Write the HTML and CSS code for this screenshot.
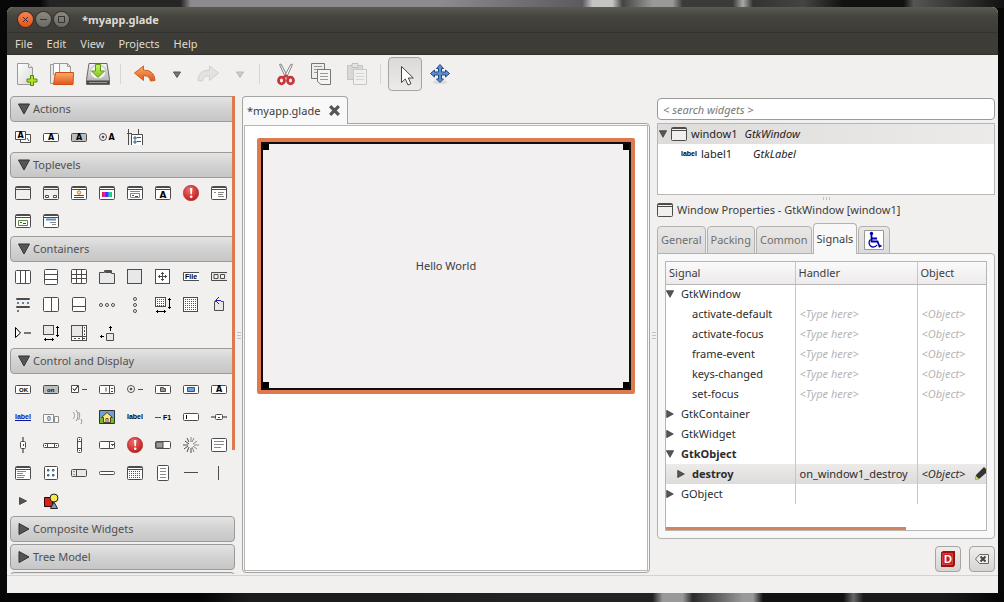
FILE: index.html
```html
<!DOCTYPE html>
<html lang="en">
<head>
<meta charset="utf-8">
<title>*myapp.glade</title>
<link rel="stylesheet" href="styles.css">
</head>
<body>
<svg class="defs" aria-hidden="true">
  <defs>
    <linearGradient id="g-orange" x1="0" y1="0" x2="0" y2="1"><stop offset="0" stop-color="#f9b06a"/><stop offset="1" stop-color="#e2541b"/></linearGradient>
    <linearGradient id="g-paper" x1="0" y1="0" x2="1" y2="1"><stop offset="0" stop-color="#fff"/><stop offset="1" stop-color="#d8d8d6"/></linearGradient>
    <linearGradient id="g-drive" x1="0" y1="0" x2="0" y2="1"><stop offset="0" stop-color="#f4f4f4"/><stop offset="1" stop-color="#a4a4a4"/></linearGradient>
    <linearGradient id="g-green" x1="0" y1="0" x2="0" y2="1"><stop offset="0" stop-color="#cdf06a"/><stop offset="1" stop-color="#7fc414"/></linearGradient>
    <radialGradient id="g-red" cx=".4" cy=".3" r=".8"><stop offset="0" stop-color="#f26a6a"/><stop offset="1" stop-color="#b81414"/></radialGradient>
    <linearGradient id="g-hue"><stop offset="0" stop-color="#e02020"/><stop offset=".25" stop-color="#e020d0"/><stop offset=".5" stop-color="#2030f0"/><stop offset=".75" stop-color="#20d0d0"/><stop offset="1" stop-color="#30d020"/></linearGradient>
    <pattern id="p-dots" width="2" height="2" patternUnits="userSpaceOnUse"><rect width="1" height="1" fill="#555"/></pattern>
  </defs>
  <symbol id="win" viewBox="0 0 16 16"><rect x=".5" y="1.5" width="15" height="13" rx="1"/><path d="M1 2.5h14M1 4.5h14"/></symbol>
  <symbol id="btn" viewBox="0 0 16 16"><rect x=".5" y="4.5" width="15" height="8" rx="1"/></symbol>
  <symbol id="alert" viewBox="0 0 16 16"><circle cx="8" cy="8" r="7.700" fill="url(#g-red)" stroke="#b02020" stroke-width=".6"/><path d="M7 3h2.400l-.5 6.300h-1.400z" fill="#fff" stroke="none"/><circle cx="8.200" cy="11.800" r="1.300" fill="#fff" stroke="none"/></symbol>
  <symbol id="down" viewBox="0 0 12 12"><path d="M.5 1h11L6 11z" fill="#555" stroke="#333"/></symbol>
  <symbol id="right" viewBox="0 0 12 12"><path d="M1 .5v11L11 6z" fill="#555" stroke="#333"/></symbol>
</svg>

<div class="window">
  <header class="titlebar">
    <button class="wm wm-close" aria-label="Close"><svg viewBox="0 0 15 15"><path d="M5 5l5 5M10 5l-5 5"/></svg></button>
    <button class="wm" aria-label="Minimize"><svg viewBox="0 0 15 15"><path d="M4 7.500h7"/></svg></button>
    <button class="wm" aria-label="Maximize"><svg viewBox="0 0 15 15"><path d="M4.500 4.500h6v6h-6z"/></svg></button>
    <h1>*myapp.glade</h1>
  </header>

  <nav class="menubar">
    <button>File</button><button>Edit</button><button>View</button><button>Projects</button><button>Help</button>
  </nav>

  <div class="toolbar">
    <button aria-label="New"><svg viewBox="0 0 24 24"><path d="M3.500 1.500h11l4 4v17h-15z" fill="url(#g-paper)" stroke="#9a9a9a"/><path d="M14.500 1.500v4h4" fill="#eee" stroke="#9a9a9a"/><path d="M16.500 13.500h3v3.500h3.500v3h-3.500v3.500h-3V20H13v-3h3.500z" fill="#b5e02c" stroke="#4e8a06"/></svg></button>
    <button aria-label="Open"><svg viewBox="0 0 24 24"><path d="M.5 2.500h5v19h-5z" fill="#e8e8e6" stroke="#999"/><path d="M3.500 1.500h7l3 3v8h-10z" fill="#fff" stroke="#999"/><path d="M9.500 1.500h8l3 3v9h-11z" fill="#f3f3f3" stroke="#999"/><path d="M17.500 1.500v3h3" fill="none" stroke="#999"/><path d="M5.500 10.500h18l-.5 12h-19.500z" fill="url(#g-orange)" stroke="#cf4d16"/></svg></button>
    <button aria-label="Save"><svg viewBox="0 0 24 24"><path d="M3 1.500h18l2.500 16v5H.5v-5z" fill="url(#g-drive)" stroke="#666"/><path d="M1 18.500h22v3.500H1z" fill="#4a4a4a"/><path d="M3 20.500h18" stroke="#999"/><ellipse cx="12" cy="10" rx="8" ry="7" fill="#f4f4f4" stroke="#bbb"/><path d="M9.500 2.500h5v6.500h4l-6.500 6.500L5.500 9h4z" fill="url(#g-green)" stroke="#5b9a0a"/></svg></button>
    <span class="sep"></span>
    <button class="wide" aria-label="Undo"><svg viewBox="0 0 24 24"><path d="M10.500 4L1.500 11l9 7.500v-4.700c4-.3 6 1.500 7 5.200l4.500-.5C21.500 11 17 8 10.500 8.200z" fill="url(#g-orange)" stroke="#c8601c" stroke-linejoin="round"/></svg></button>
    <button class="drop" aria-label="Undo history"><svg viewBox="0 0 12 12"><path d="M2.500 4h7L6 9.500z" fill="#777" stroke="#555"/></svg></button>
    <button class="wide" aria-label="Redo" disabled><svg viewBox="0 0 24 24"><path d="M13.500 4l9 7-9 7.500v-4.700c-4-.3-6 1.500-7 5.200l-4.500-.5C2.500 11 7 8 13.500 8.200z" fill="#e2e2e0" stroke="#cfcfcd" stroke-linejoin="round"/></svg></button>
    <button class="drop" aria-label="Redo history" disabled><svg viewBox="0 0 12 12"><path d="M2.500 4h7L6 9.500z" fill="#ccc" stroke="#b8b8b8"/></svg></button>
    <span class="sep sep-wide"></span>
    <button aria-label="Cut"><svg viewBox="0 0 24 24"><path d="M5.500 2.500l1.500-.5 6.500 12-2 1.500z" fill="#eee" stroke="#888"/><path d="M18.500 2.500L17 2l-6.500 12 2 1.500z" fill="#fff" stroke="#888"/><ellipse cx="7.500" cy="18.500" rx="3" ry="3.300" fill="none" stroke="#c8363a" stroke-width="2.800"/><ellipse cx="16.500" cy="18.500" rx="3" ry="3.300" fill="none" stroke="#c8363a" stroke-width="2.800"/><path d="M9 15.500l3-2 3 2" fill="none" stroke="#c8363a" stroke-width="2"/></svg></button>
    <button aria-label="Copy"><svg viewBox="0 0 24 24"><path d="M1.500 1.500h13v15h-13z" fill="#eeeeec" stroke="#777"/><path d="M4 4.500h8M4 7.500h8M4 10.500h5" stroke="#999"/><path d="M7.500 7.500h13v15h-9.500l-3.500-3z" fill="#f4f4f2" stroke="#777"/><path d="M10 11.500h8M10 14.500h8M10 17.500h8" stroke="#999"/></svg></button>
    <button aria-label="Paste" disabled><svg viewBox="0 0 24 24"><path d="M1.500 3.500h15v14h-15z" fill="#d8d8d6" stroke="#c4c4c2"/><path d="M6 1.500h6v4H6z" fill="#e4e4e2" stroke="#c0c0be"/><path d="M7.500 7.500h13v15h-13z" fill="#f0f0ee" stroke="#c8c8c6"/><path d="M10 11.500h8M10 14.500h8M10 17.500h8" stroke="#d4d4d2"/></svg></button>
    <span class="sep"></span>
    <button class="pressed" aria-label="Select"><svg viewBox="0 0 24 24"><path d="M8.500 4.500v16l3.800-3.500 2.700 6 3-1.300-2.700-5.700h5z" fill="#fff" stroke="#444"/></svg></button>
    <button aria-label="Drag resize"><svg viewBox="0 0 24 24"><ellipse cx="12" cy="20" rx="7" ry="2" fill="#dcdad8"/><path d="M12 2.500l3.500 4h-2v3.500h4v-2l4 3.500-4 3.500v-2h-4v4h2L12 20.500l-3.500-3.500h2v-4h-4v2l-4-3.500 4-3.500v2h4V6.500h-2z" fill="#5f8fcb" stroke="#204a87"/></svg></button>
  </div>

  <main class="workspace">
    <aside class="palette">
      <button class="group"><svg><use href="#down"/></svg>Actions</button>
      <div class="tools">
        <button aria-label="Action group"><svg viewBox="0 0 16 16"><path d="M5.500 5.500h10v8h-10z"/><path d="M.5 2.500h10v8H.5z"/><text x="2.500" y="9" class="t8">A</text><path d="M12 9l2 3"/></svg></button>
        <button aria-label="Action"><svg viewBox="0 0 16 16"><use href="#btn"/><text x="5" y="11" class="t8">A</text></svg></button>
        <button aria-label="Toggle action"><svg viewBox="0 0 16 16"><g class="shade"><use href="#btn"/></g><text x="5" y="11" class="t8">A</text></svg></button>
        <button aria-label="Radio action"><svg viewBox="0 0 16 16"><circle cx="4" cy="8" r="3.500"/><circle cx="4" cy="8" r="1" class="dark"/><text x="9.500" y="10.500" class="t8">A</text></svg></button>
        <button aria-label="Recent action"><svg viewBox="0 0 16 16"><path d="M1.500 0v16M11.500 0v5M4.500 16V5.500h11V16M0 4.500h5"/><path d="M7 8h2v2H7zM7 12h2v2H7z" class="tint"/><path d="M10 8.500h4M10 12.500h4"/></svg></button>
      </div>

      <button class="group"><svg><use href="#down"/></svg>Toplevels</button>
      <div class="tools">
        <button aria-label="Window"><svg viewBox="0 0 16 16"><g class="clear"><use href="#win"/></g></svg></button>
        <button aria-label="Dialog"><svg viewBox="0 0 16 16"><g class="clear"><use href="#win"/></g><path d="M2.500 10.500h3v2h-3zM10.500 10.500h3v2h-3z"/></svg></button>
        <button aria-label="About dialog"><svg viewBox="0 0 16 16"><use href="#win"/><circle cx="8" cy="7.500" r="1.700" stroke="#d07a10" fill="#ffe0a0"/><path d="M3 10.500h10M3 12.500h10"/></svg></button>
        <button aria-label="Color dialog"><svg viewBox="0 0 16 16"><use href="#win"/><path d="M3 7h10v5H3z" fill="url(#g-hue)" stroke="none"/></svg></button>
        <button aria-label="File chooser"><svg viewBox="0 0 16 16"><use href="#win"/><path d="M3 6.500h10" class="soft"/><path d="M3.500 8.500h9v4h-9z" class="soft"/><path d="M5 10.500h2M8 11.500h3"/></svg></button>
        <button aria-label="Font dialog"><svg viewBox="0 0 16 16"><use href="#win"/><text x="4.500" y="13" class="t9">A</text></svg></button>
        <button aria-label="Message dialog"><svg viewBox="0 0 16 16"><use href="#alert"/></svg></button>
        <button aria-label="Recent chooser"><svg viewBox="0 0 16 16"><use href="#win"/><path d="M3 7.500h2M7 7.500h6M7 9.500h5M7 11.500h6" class="soft"/></svg></button>
        <button aria-label="Assistant"><svg viewBox="0 0 16 16"><use href="#win"/><path d="M3.500 7.500h9v5h-9z" stroke="#5a8a3a"/><path d="M5 9.500h2M8 10.500h3"/></svg></button>
        <button aria-label="Link window"><svg viewBox="0 0 16 16"><use href="#win"/><path d="M3 6.500h10" stroke="#5a90cc" stroke-width="2"/><path d="M7 9.500h6M9 11.500h4" class="soft"/></svg></button>
      </div>

      <button class="group"><svg><use href="#down"/></svg>Containers</button>
      <div class="tools">
        <button aria-label="Horizontal box"><svg viewBox="0 0 16 16"><rect x=".5" y="1.500" width="15" height="13" rx="1"/><path d="M5.500 2v12M10.500 2v12"/></svg></button>
        <button aria-label="Vertical box"><svg viewBox="0 0 16 16"><rect x="1.500" y=".5" width="13" height="15" rx="1"/><path d="M2 5.500h12M2 10.500h12"/></svg></button>
        <button aria-label="Table"><svg viewBox="0 0 16 16"><rect x=".5" y=".5" width="15" height="14" rx="1"/><path d="M5.500 1v13M10.500 1v13M1 5.500h14M1 9.500h14"/></svg></button>
        <button aria-label="Notebook"><svg viewBox="0 0 16 16"><path d="M.5 3.500h5v-2h7v3h3v10H.5z" class="pale"/><path d="M6.500 2.500h6v1h-6z" class="grey"/></svg></button>
        <button aria-label="Frame"><svg viewBox="0 0 16 16"><rect x=".5" y=".5" width="14" height="14" class="pale"/></svg></button>
        <button aria-label="Alignment"><svg viewBox="0 0 16 16"><rect x=".5" y=".5" width="14" height="14"/><path d="M7.500 3v9M3 7.500h9M6 4.500h3M6 10.500h3M4.500 6v3M10.500 6v3"/></svg></button>
        <button aria-label="Menu bar"><svg viewBox="0 0 16 16"><path d="M16 3.500H.5v8H16"/><text x="2" y="10">File</text></svg></button>
        <button aria-label="Toolbar"><svg viewBox="0 0 16 16"><path d="M16 3.500H.5v8H16M3 5.500h4v4H3zM9.500 5.500h4v4h-4z" class="pale"/></svg></button>
        <button aria-label="Tool palette"><svg viewBox="0 0 16 16"><path d="M1.500 1.500h13v1h-13zM1.500 9.500h13v1h-13z"/><path d="M2.500 5.500h1v1h-1zM7.500 5.500h1v1h-1zM12.500 5.500h1v1h-1z" class="tint"/><path d="M2.500 13.500h1v1h-1z"/></svg></button>
        <button aria-label="Horizontal panes"><svg viewBox="0 0 16 16"><rect x=".5" y=".5" width="15" height="14" rx="1"/><path d="M8.500 1v13"/></svg></button>
        <button aria-label="Vertical panes"><svg viewBox="0 0 16 16"><rect x="1.500" y=".5" width="13" height="14" rx="1"/><path d="M2 9.500h12"/></svg></button>
        <button aria-label="Horizontal button box"><svg viewBox="0 0 16 16"><circle cx="2" cy="8" r="1.500"/><circle cx="8" cy="8" r="1.500"/><circle cx="14" cy="8" r="1.500"/></svg></button>
        <button aria-label="Vertical button box"><svg viewBox="0 0 16 16"><circle cx="8" cy="2" r="1.500"/><circle cx="8" cy="8" r="1.500"/><circle cx="8" cy="14" r="1.500"/></svg></button>
        <button aria-label="Layout"><svg viewBox="0 0 16 16"><rect x=".5" y=".5" width="10" height="9"/><path d="M2 2h8v7H2z" fill="url(#p-dots)" stroke="none"/><path d="M14.500 1v11M13 2.500h3M13 10.500h3M1 14.500h10M2.500 13v3M9.500 13v3" class="ink"/></svg></button>
        <button aria-label="Fixed"><svg viewBox="0 0 16 16"><rect x=".5" y=".5" width="14" height="14"/><path d="M2 2h12v12H2z" fill="url(#p-dots)" stroke="none"/></svg></button>
        <button aria-label="Event box"><svg viewBox="0 0 16 16"><path d="M6 4.500H3.500v9h9v-9H10" class="pale"/><path d="M8 0L4.500 3.500L8 7M5 3.500h5" fill="none" stroke="#2418b8"/></svg></button>
        <button aria-label="Expander"><svg viewBox="0 0 16 16"><path d="M.5 2.500v10L5.500 8z" class="ink"/><path d="M9 8h7" stroke-width="1.500"/></svg></button>
        <button aria-label="Viewport"><svg viewBox="0 0 16 16"><rect x=".5" y=".5" width="10" height="9" class="pale"/><path d="M14.500 1v11M13 2.500h3M13 10.500h3M1 14.500h10M2.500 13v3M9.500 13v3" class="ink"/></svg></button>
        <button aria-label="Scrolled window"><svg viewBox="0 0 16 16"><rect x=".5" y=".5" width="15" height="15"/><path d="M1 1h10v10H1z" fill="#e8e8e8" stroke="none"/><path d="M11.500 1v14M1 11.500h14M13.500 2v1.500M13.500 5v2M13.500 8.500V10M3 13.500h2M7 13.500h2M11 13.500h3"/></svg></button>
        <button aria-label="Offscreen window"><svg viewBox="0 0 16 16"><path d="M7.500 8.500h7v7h-7z" class="pale"/><path d="M11.500 1v5M10 2.500h3M1 11.500h4M2.500 10v3" class="ink"/></svg></button>
      </div>

      <button class="group"><svg><use href="#down"/></svg>Control and Display</button>
      <div class="tools">
        <button aria-label="Button"><svg viewBox="0 0 16 16"><use href="#btn"/><text x="4" y="10.500" class="t5">OK</text></svg></button>
        <button aria-label="Toggle button"><svg viewBox="0 0 16 16"><g class="shade"><use href="#btn"/></g><text x="4" y="10.500" class="t5">on</text></svg></button>
        <button aria-label="Check button"><svg viewBox="0 0 16 16"><path d="M.5 4.500h7v7h-7zM11 8.500h5"/><path d="M2 7.500l1.500 2L7 5" class="ink"/></svg></button>
        <button aria-label="Spin button"><svg viewBox="0 0 16 16"><use href="#btn"/><path d="M10.500 5v7M7 6.500v4M12 7.500h2M12 10.500h2"/></svg></button>
        <button aria-label="Radio button"><svg viewBox="0 0 16 16"><circle cx="4" cy="8" r="3.500"/><circle cx="4" cy="8" r="1" class="dark"/><path d="M11 8.500h5"/></svg></button>
        <button aria-label="File button"><svg viewBox="0 0 16 16"><use href="#btn"/><path d="M5.500 6.500h3v1h2v3h-5z" class="grey"/></svg></button>
        <button aria-label="Color button"><svg viewBox="0 0 16 16"><use href="#btn"/><path d="M4.500 6.500h7v4h-7z" fill="#6fa3dc" stroke="#27578f"/></svg></button>
        <button aria-label="Font button"><svg viewBox="0 0 16 16"><use href="#btn"/><text x="5" y="11" class="t8">A</text></svg></button>
        <button aria-label="Link button"><svg viewBox="0 0 16 16"><text x="0" y="10" class="link">label</text><path d="M0 11.500h16" stroke="#1010a0"/></svg></button>
        <button aria-label="Scale button"><svg viewBox="0 0 16 16" class="dim"><path d="M.5 5.500h10v8H.5zM11.500 7.500h4v6h-4z"/><text x="4" y="12">0</text></svg></button>
        <button aria-label="Volume button"><svg viewBox="0 0 16 16" class="dim"><path d="M2 3c2 2 2 5 0 7M5 1c2 3 3 7 0 11M7.500 3c2 3 1 6 0 8M10 10c1 2 1 3 0 5"/></svg></button>
        <button aria-label="Image"><svg viewBox="0 0 16 16"><path d="M.5 1.500h15v13H.5z" fill="#6aa0dc" stroke="#333"/><path d="M1 9h14v5H1z" fill="#72b834" stroke="none"/><path d="M2.500 8.500L8 3.500l5.500 5h-2v5h-7v-5z" fill="#ffe680" stroke="#5a4010"/><path d="M7 9.500h2v4H7z"/></svg></button>
        <button aria-label="Label"><svg viewBox="0 0 16 16"><text x="0" y="10">label</text></svg></button>
        <button aria-label="Accelerator label"><svg viewBox="0 0 16 16"><path d="M0 8.500h6"/><text x="8" y="11">F1</text></svg></button>
        <button aria-label="Entry"><svg viewBox="0 0 16 16"><rect x=".5" y="4.500" width="15" height="7" rx="1"/><path d="M3.500 6v4" class="ink"/></svg></button>
        <button aria-label="Horizontal scale"><svg viewBox="0 0 16 16"><path d="M0 8h16" stroke-width="2" class="soft"/><rect x="4.500" y="5.500" width="7" height="5" rx="1"/><path d="M7 8.500h2"/></svg></button>
        <button aria-label="Vertical scale"><svg viewBox="0 0 16 16"><path d="M8 0v16" stroke-width="2" class="soft"/><rect x="5.500" y="4.500" width="5" height="7" rx="1"/><path d="M8.500 7v2"/></svg></button>
        <button aria-label="Horizontal scrollbar"><svg viewBox="0 0 16 16"><rect x=".5" y="6.500" width="15" height="4" rx="1"/><path d="M4.500 7v3M11.500 7v3M2 8.500h1M13 8.500h1"/></svg></button>
        <button aria-label="Vertical scrollbar"><svg viewBox="0 0 16 16"><rect x="6.500" y=".5" width="4" height="15" rx="1"/><path d="M7 4.500h3M7 11.500h3M8.500 2v1M8.500 13v1"/></svg></button>
        <button aria-label="Combo box"><svg viewBox="0 0 16 16"><rect x=".5" y="4.500" width="15" height="7" rx="1"/><path d="M10.500 5v6M12 7.500h3M13 8.500h1"/></svg></button>
        <button aria-label="Info bar"><svg viewBox="0 0 16 16"><use href="#alert"/></svg></button>
        <button aria-label="Progress bar"><svg viewBox="0 0 16 16"><rect x=".5" y="4.500" width="15" height="7" rx="1"/><path d="M1 5h7v6H1z" class="grey"/></svg></button>
        <button aria-label="Spinner"><svg viewBox="0 0 16 16"><path d="M8 0v5M11 1l-2 4M14 4l-4 3M16 8h-5M14 12l-4-3M11 15l-2-5" class="soft"/><path d="M8 16v-5M4 15l2-5M1 12l4-3M0 8h5M2 4l4 3M4 1l2 4"/></svg></button>
        <button aria-label="Text view"><svg viewBox="0 0 16 16"><rect x=".5" y="1.500" width="15" height="13" rx="1"/><path d="M3 4.500h10M3 7.500h10M3 10.500h7" class="soft"/></svg></button>
        <button aria-label="Tree view"><svg viewBox="0 0 16 16"><use href="#win"/><path d="M2 6.500h9M2 8.500h6M2 10.500h8M2 12.500h7" class="soft"/></svg></button>
        <button aria-label="Icon view"><svg viewBox="0 0 16 16"><rect x="1.500" y="1.500" width="13" height="13" rx="1"/><path d="M4.500 4.500h1.500v1.500h-1.500zM9.500 4.500h1.500v1.500h-1.500zM4.500 9.500h1.500v1.500h-1.500zM9.500 9.500h1.500v1.500h-1.500z" class="tint"/></svg></button>
        <button aria-label="Handle box"><svg viewBox="0 0 16 16"><rect x=".5" y="4.500" width="15" height="7" rx="1" class="pale"/><path d="M5.500 5v6M3 6v1M3 9v1"/></svg></button>
        <button aria-label="Status bar"><svg viewBox="0 0 16 16"><rect x=".5" y="6.500" width="15" height="3" rx="1"/></svg></button>
        <button aria-label="Calendar"><svg viewBox="0 0 16 16"><use href="#win"/><path d="M2 6h12v7H2z" fill="url(#p-dots)" stroke="none"/></svg></button>
        <button aria-label="Menu"><svg viewBox="0 0 16 16"><rect x="2.500" y=".5" width="11" height="15" rx="1"/><path d="M5 3.500h6M5 6.500h6M5 9.500h6M5 12.500h6" class="soft"/></svg></button>
        <button aria-label="Horizontal separator"><svg viewBox="0 0 16 16"><path d="M1 7.500h14"/></svg></button>
        <button aria-label="Vertical separator"><svg viewBox="0 0 16 16"><path d="M7.500 1v14"/></svg></button>
        <button aria-label="Arrow"><svg viewBox="0 0 16 16"><path d="M4.500 4.500v7l7-3.500z" fill="#555"/></svg></button>
        <button aria-label="Drawing area"><svg viewBox="0 0 16 16"><path d="M1.500 4.500h8v9h-8z" fill="#d82020" stroke="#300"/><circle cx="11" cy="5" r="4" fill="#f6ea4a" stroke="#222"/><path d="M11 9l3.500 6.500h-7z" fill="#8a98b8" stroke="#222"/></svg></button>
      </div>

      <button class="group"><svg><use href="#right"/></svg>Composite Widgets</button>
      <button class="group"><svg><use href="#right"/></svg>Tree Model</button>
      <button class="group" aria-hidden="true"></button>
      <div class="overlay-scroll"></div>
    </aside>

    <div class="pane-grip"><i></i><i></i><i></i></div>

    <section class="editor">
      <div class="doc-tabs">
        <div class="doc-tab">
          <span>*myapp.glade</span>
          <button aria-label="Close tab"><svg viewBox="0 0 12 12"><path d="M2 2l8 8M10 2l-8 8"/></svg></button>
        </div>
      </div>
      <div class="doc-page">
        <div class="canvas">
          <div class="selection">
            <div class="form">
              <i class="tl"></i><i class="tr"></i><i class="bl"></i><i class="br"></i>
              <span>Hello World</span>
            </div>
          </div>
        </div>
      </div>
    </section>

    <div class="pane-grip"><i></i><i></i><i></i></div>

    <section class="inspector">
      <input class="search" type="text" aria-label="Search widgets" placeholder="&lt; search widgets &gt;">
      <ul class="tree">
        <li class="selected"><svg class="exp"><use href="#down"/></svg><svg class="wi"><use href="#win"/></svg><span>window1</span><em>GtkWindow</em></li>
        <li class="child"><svg class="wi" viewBox="0 0 16 16"><text x="0" y="10">label</text></svg><span>label1</span><em>GtkLabel</em></li>
      </ul>
      <div class="row-grip"><i></i><i></i><i></i></div>
      <h2><svg class="wi"><use href="#win"/></svg>Window Properties - GtkWindow [window1]</h2>

      <div class="tabs" role="tablist">
        <button role="tab">General</button>
        <button role="tab">Packing</button>
        <button role="tab">Common</button>
        <button role="tab" class="active" aria-selected="true">Signals</button>
        <button role="tab" class="a11y" aria-label="Accessibility"><svg viewBox="0 0 20 20"><path d="M.5.5h19v19H.5z" fill="#fff" stroke="#999"/><circle cx="7.500" cy="3.500" r="1.700" fill="#00a" stroke="none"/><path d="M7.500 5v6.500h6l2 5 2-1M8 8.500h5" stroke="#00a" stroke-width="1.800" fill="none"/><path d="M6.500 9.500a4.300 4.300 0 1 0 6.500 5.500" stroke="#00a" stroke-width="1.300" fill="none"/></svg></button>
      </div>

      <div class="tab-page">
        <div class="table-box">
          <table>
            <thead><tr><th class="c-signal">Signal</th><th class="c-handler">Handler</th><th>Object</th></tr></thead>
            <tbody>
              <tr><td><svg><use href="#down"/></svg>GtkWindow</td><td></td><td></td></tr>
              <tr class="leaf"><td>activate-default</td><td>&lt;Type here&gt;</td><td>&lt;Object&gt;</td></tr>
              <tr class="leaf"><td>activate-focus</td><td>&lt;Type here&gt;</td><td>&lt;Object&gt;</td></tr>
              <tr class="leaf"><td>frame-event</td><td>&lt;Type here&gt;</td><td>&lt;Object&gt;</td></tr>
              <tr class="leaf"><td>keys-changed</td><td>&lt;Type here&gt;</td><td>&lt;Object&gt;</td></tr>
              <tr class="leaf"><td>set-focus</td><td>&lt;Type here&gt;</td><td>&lt;Object&gt;</td></tr>
              <tr><td><svg><use href="#right"/></svg>GtkContainer</td><td></td><td></td></tr>
              <tr><td><svg><use href="#right"/></svg>GtkWidget</td><td></td><td></td></tr>
              <tr class="bold"><td><svg><use href="#down"/></svg>GtkObject</td><td></td><td></td></tr>
              <tr class="bold nested"><td><svg><use href="#right"/></svg>destroy</td><td>on_window1_destroy</td><td><div class="edit"><em>&lt;Object&gt;</em><svg class="pencil" viewBox="0 0 12 14"><path d="M1 13l1-5 8-8 2 2v4l-7 6z" fill="#333"/><path d="M1 13l1-4 3 3z" fill="#d8d860"/></svg></div></td></tr>
              <tr><td><svg><use href="#right"/></svg>GObject</td><td></td><td></td></tr>
            </tbody>
          </table>
          <div class="overlay-scroll-x"></div>
        </div>
      </div>

      <div class="actions">
        <button aria-label="Documentation"><svg viewBox="0 0 16 16"><path d="M1 1.500L3 0h12v14l-1.500 2H1z" fill="#a01010"/><path d="M2.500 2.500h10v11h-10z" fill="#d01c1c" stroke="#c44"/><text x="4" y="12" class="doc">D</text></svg></button>
        <button aria-label="Clear"><svg viewBox="0 0 16 16"><path d="M5.500 3.500h9v9h-9L1.500 8z" fill="#eee" stroke="#666"/><path d="M6.500 5.500l5 5M11.500 5.500l-5 5" stroke="#444" stroke-width="2"/></svg></button>
      </div>
    </section>
  </main>

  <footer class="statusbar"></footer>
</div>
</body>
</html>
```
FILE: styles.css
```css
* { box-sizing: border-box; }

body {
  margin: 0;
  height: 100vh;
  padding: 7px 6px 9px 7px;
  display: flex;
  background:
    linear-gradient(90deg, #080808 0 4%, #262626 5% 18%, #8c8a8c 19% 44%, #5c5a5c 58%, #c4c4c4 59% 61%, #444 62%, #999 65% 67%, #3a3a3a 68% 73%, #aaa 74%, #333 75%, #444 80%, #111 84% 90%, #555 91%, #111) top / 100% 8px no-repeat,
    linear-gradient(90deg, #050505 0 20%, #1c1c1c 25% 40%, #222 50% 65%, #999 66% 68%, #2a2a2a 69%, #999 74% 75%, #111 76% 84%, #666 85%, #1a1a1a 86% 94%, #050505) bottom / 100% 10px no-repeat,
    #070707;
  font: 11px/14px "Noto Sans", "Open Sans", sans-serif;
  color: #3c3c3c;
}

button { font: inherit; color: inherit; border: 0; background: none; padding: 0; margin: 0; }
svg { display: block; flex: none; }
.defs { position: absolute; width: 0; height: 0; }

.window {
  flex: 1;
  min-width: 0;
  display: flex;
  flex-direction: column;
  background: #f2f0ef;
  border-radius: 6px 6px 0 0;
  overflow: hidden;
}

/* title and menu */
.titlebar {
  flex: none;
  height: 26px;
  display: flex;
  align-items: center;
  gap: 3px;
  padding: 0 11px;
  background: linear-gradient(#5a5a52, #45433d 40%, #3e3c37);
  border-bottom: 1px solid #35332f;
}
.wm { width: 15px; height: 15px; border-radius: 50%; background: linear-gradient(#8a8880, #6c6a63); box-shadow: 0 0 0 1px #33312d; }
.wm-close { background: linear-gradient(#f78252, #e4521e); }
.wm svg { width: 15px; height: 15px; fill: none; stroke: #35332f; }
.titlebar h1 { margin: 0 0 0 10px; font-size: 11px; line-height: 16px; font-weight: 700; color: #dfdbd2; }

.menubar {
  flex: none;
  height: 22px;
  display: flex;
  gap: 14px;
  padding: 0 8px;
  background: #3e3c37;
  border-bottom: 1px solid #33312d;
  color: #dfdbd2;
}

/* toolbar */
.toolbar { flex: none; height: 39px; display: flex; align-items: center; padding: 0 1px 2px; }
.toolbar button { width: 36px; height: 34px; display: grid; place-items: center; }
.toolbar svg { width: 24px; height: 24px; }
.toolbar .wide { width: 42px; }
.toolbar .drop { width: 21px; }
.toolbar .drop svg { width: 12px; height: 12px; }
.toolbar .pressed { width: 34px; margin-left: 4px; border: 1px solid #a6a4a2; border-radius: 4px; background: linear-gradient(#dcdad9, #ecebea); }
.sep { width: 8px; height: 20px; background: linear-gradient(#d8d6d4, #d8d6d4) center / 1px 100% no-repeat; }
.sep-wide { width: 18px; }

.workspace {
  flex: 1;
  min-height: 0;
  display: grid;
  grid-template-columns: 225px 7px minmax(0, 1fr) 7px 338px;
  padding: 2px 3px 0;
}
.pane-grip { display: flex; flex-direction: column; align-items: center; justify-content: center; gap: 2px; }
.pane-grip i { width: 4px; height: 1px; background: #c4c2c0; }

/* widget palette */
.palette { position: relative; overflow: hidden; display: flex; flex-direction: column; margin-bottom: 1px; }
.group {
  flex: none;
  height: 26px;
  margin-bottom: 2px;
  display: flex;
  align-items: center;
  gap: 3px;
  padding: 0 7px;
  border: 1px solid #9c9a99;
  border-radius: 4px;
  background: linear-gradient(#e4e4e4, #d2d2d2 50%, #c6c6c6);
  color: #505050;
}
.group svg { width: 12px; height: 12px; }
.group:has(+ .tools) { margin-bottom: 0; }
.tools { flex: none; display: grid; grid-template-columns: repeat(8, 28px); grid-auto-rows: 28px; padding: 1px 5px; width: 224px; }
.tools button { width: 16px; height: 28px; display: grid; place-items: center; }
.tools svg, .wi { width: 16px; height: 16px; overflow: visible; fill: #fff; stroke: #4c4c4c; }
.tools text, .wi text { font: 700 7px "Liberation Sans", sans-serif; fill: #000; stroke: none; }
.tools text.t5 { font-size: 6px; }
.tools text.t8 { font: 700 8px "DejaVu Sans", sans-serif; }
.tools text.t9 { font: 700 9px "DejaVu Sans", sans-serif; }
.tools text.link { fill: #1010a0; }
.clear { fill: #f2f0ef; }
.shade, .pale { fill: #e8e8e8; }
.shade { fill: #bdbdbd; }
.grey { fill: #999; }
.dark { fill: #222; }
.ink { stroke: #000; }
.soft { stroke: #888; }
.tint { stroke: #2c5d80; }
.dim { opacity: 0.6; }
.overlay-scroll { position: absolute; top: 0; right: 0; width: 3px; height: 74%; background: #dd7a50; }

/* editor */
.editor { display: flex; flex-direction: column; padding-bottom: 2px; }
.doc-tabs { display: flex; position: relative; }
.doc-tab {
  display: flex;
  align-items: center;
  gap: 8px;
  height: 28px;
  margin-bottom: -1px;
  padding: 0 6px 0 4px;
  border: 1px solid #a6a4a2;
  border-bottom: 0;
  border-radius: 4px 4px 0 0;
  background: #f9f8f8;
}
.doc-tab svg { width: 13px; height: 13px; stroke: #555; stroke-width: 3; }
.doc-page { flex: 1; display: flex; padding: 1px; border: 1px solid #a6a4a2; border-radius: 0 4px 4px 4px; background: #f9f8f8; }
.canvas { flex: 1; padding: 12px; border: 1px solid #b8b6b4; background: #fff; }
.selection { width: 378px; max-width: 100%; height: 256px; padding: 4px; border-radius: 2px; background: #dd7a50; }
.form { position: relative; height: 100%; display: grid; place-items: center; border: 2px solid #120c0c; background: #f2f0f0; }
.form i { position: absolute; width: 6px; height: 6px; background: #000; }
.tl { top: 0; left: 0; }
.tr { top: 0; right: 0; }
.bl { bottom: 0; left: 0; }
.br { bottom: 0; right: 0; }

/* inspector */
.inspector { display: flex; flex-direction: column; padding: 2px 0 3px; min-width: 0; }
.search {
  flex: none;
  height: 22px;
  width: 100%;
  padding: 0 5px;
  border: 1px solid #9c9a99;
  border-radius: 4px;
  background: #fff;
  font: inherit;
}
.search::placeholder { color: #777; font-style: italic; opacity: 1; }
.tree { flex: none; height: 72px; margin: 3px 0 0; padding: 0; list-style: none; border: 1px solid #b8b6b4; background: #fff; color: #222; }
.tree li { display: flex; align-items: center; height: 20px; gap: 4px; padding-left: 1px; }
.tree .selected { background: linear-gradient(90deg, #dedcdb, #ecebea); }
.tree .selected .wi { fill: #f2f0ef; }
.tree .child { padding-left: 23px; }
.tree .exp { width: 8px; height: 8px; }
.tree em { margin-left: 3px; }
.tree .child em { margin-left: 17px; }
.row-grip { display: flex; justify-content: center; gap: 2px; padding-top: 2px; }
.row-grip i { width: 1px; height: 3px; background: #c4c2c0; }
.inspector h2 { display: flex; align-items: center; gap: 4px; margin: 1px 0 0; font-size: 11px; font-weight: 400; line-height: 18px; white-space: nowrap; }
.inspector h2 .wi { fill: #f2f0ef; }

.tabs { display: flex; align-items: flex-end; gap: 1px; height: 31px; margin: 4px 0 -1px; position: relative; }
.tabs button {
  height: 28px;
  padding: 0 3px;
  border: 1px solid #b4b2b0;
  border-radius: 4px 4px 0 0;
  background: linear-gradient(#e9e7e6, #dddbda);
  color: #6e6e6e;
}
.tabs .active { height: 31px; border-bottom: 0; background: #f9f8f8; color: #3c3c3c; }
.tabs .a11y { padding: 0 5px; }
.tabs .a11y svg { width: 20px; height: 20px; }

.tab-page { flex: 1; min-height: 0; display: flex; padding: 7px; border: 1px solid #b4b2b0; border-radius: 0 4px 4px 4px; background: #f9f8f8; }
.table-box { position: relative; flex: 1; min-width: 0; border: 1px solid #b8b6b4; background: #fff; overflow: hidden; }
table { width: 100%; border-collapse: collapse; table-layout: fixed; }
.c-signal { width: 129px; }
.c-handler { width: 122px; }
th { height: 22px; padding: 0 3px; text-align: left; font-weight: 400; background: linear-gradient(#fbfafa, #eceaea); border-bottom: 1px solid #b8b6b4; }
td { height: 20px; padding: 0 4px; white-space: nowrap; color: #2c2c2c; }
th + th, td + td { border-left: 1px solid #c8c6c4; }
td:first-child { padding-left: 0; }
td > svg { display: inline-block; width: 8px; height: 8px; margin-right: 7px; }
.leaf td:first-child { padding-left: 26px; }
.leaf td + td { font-style: italic; color: #b4b4b4; }
.bold td:first-child { font-weight: 700; }
.nested { background: linear-gradient(#ecebea, #dddcdb); }
.nested td:first-child { padding-left: 11px; }
.edit { display: flex; align-items: center; justify-content: space-between; margin-right: -4px; }
.pencil { width: 12px; height: 14px; }
.overlay-scroll-x { position: absolute; left: 0; bottom: 0; width: 75%; height: 3px; background: #d4835c; }

.actions { display: flex; justify-content: flex-end; gap: 8px; padding-top: 7px; }
.actions button { width: 26px; height: 26px; display: grid; place-items: center; border: 1px solid #a6a4a2; border-radius: 4px; background: linear-gradient(#efeeed, #d6d4d3); }
.actions svg { width: 16px; height: 16px; }
.doc { font: 700 11px "Liberation Sans", sans-serif; fill: #fff; }

.statusbar { flex: none; height: 18px; border-top: 1px solid #d4d2d0; }
```
